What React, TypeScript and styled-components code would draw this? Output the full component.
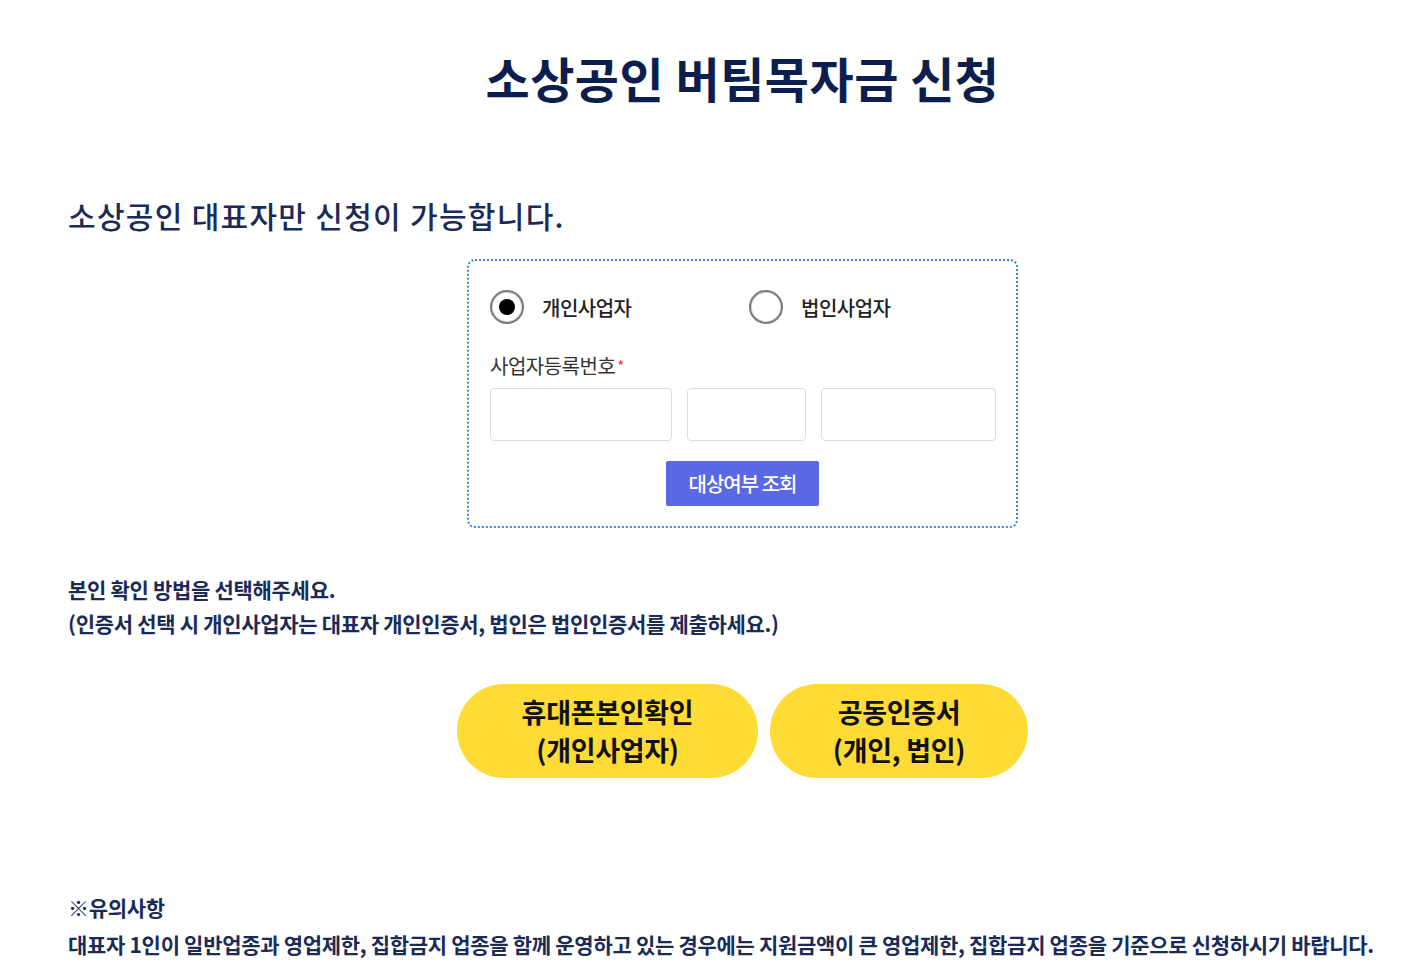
import React, { useState } from "react";
import styled, { createGlobalStyle } from "styled-components";

const Global = createGlobalStyle`
  html, body { margin: 0; padding: 0; background: #fff; overflow-x: hidden; }
  body { font-family: "Noto Sans CJK KR", "Noto Sans", sans-serif; color: #1b2a55; }
  * { box-sizing: border-box; }
`;

const Page = styled.div`
  width: 1349px;
  margin-left: 68px;
  padding-top: 43px;
  padding-bottom: 20px;
`;

const Title = styled.h1`
  margin: 0;
  text-align: center;
  font-size: 48px;
  line-height: 68px;
  font-weight: 700;
  color: #0b1e4d;
  letter-spacing: 0.5px;
`;

const Subtitle = styled.h2`
  margin: 84px 0 0;
  font-size: 30px;
  line-height: 40px;
  font-weight: 500;
  color: #1b2b57;
  letter-spacing: 1.3px;
`;

const Box = styled.div`
  width: 551px;
  height: 269px;
  margin: 24px auto 0;
  border: 2px dotted #3a83d8;
  border-radius: 8px;
  padding: 29px 21px 0 21px;
`;

const RadioRow = styled.div`
  display: grid;
  grid-template-columns: 259px auto;
  align-items: center;
`;

const RadioLabel = styled.label`
  display: flex;
  align-items: center;
  gap: 18px;
  font-size: 20px;
  font-weight: 500;
  color: #222;
  letter-spacing: -0.5px;
  cursor: pointer;
`;

const Circle = styled.span<{ $on: boolean }>`
  width: 34px;
  height: 34px;
  border-radius: 50%;
  border: 2px solid #7a7a7a;
  box-shadow: inset 0 0 0 1px #d6d6d6;
  display: flex;
  align-items: center;
  justify-content: center;
  &::after {
    content: "";
    width: 16px;
    height: 16px;
    border-radius: 50%;
    background: #000;
    display: ${(p) => (p.$on ? "block" : "none")};
  }
`;

const FieldLabel = styled.div`
  margin-top: 28px;
  font-size: 20px;
  line-height: 28px;
  color: #333;
  letter-spacing: -0.5px;
`;

const Star = styled.span`
  color: #e53935;
  font-size: 15px;
  vertical-align: top;
  margin-left: 2px;
`;

const Inputs = styled.div`
  display: grid;
  grid-template-columns: 182px 119px 175px;
  gap: 15px;
  margin-top: 8px;
`;

const Field = styled.input`
  height: 53px;
  border: 1px solid #dcdcdc;
  border-radius: 4px;
  background: #fff;
  font-size: 18px;
  padding: 0 10px;
  outline: none;
`;

const CheckButton = styled.button`
  display: block;
  margin: 20px 0 0 176px;
  width: 153px;
  height: 45px;
  border: none;
  border-radius: 2px;
  background: #5a68e6;
  color: #fff;
  font-family: inherit;
  font-size: 20px;
  font-weight: 500;
  letter-spacing: -1px;
  cursor: pointer;
`;

const Guide = styled.p`
  margin: 44px 0 0;
  font-size: 21px;
  line-height: 34px;
  font-weight: 700;
  color: #1b2b57;
  letter-spacing: -0.3px;
`;

const AuthRow = styled.div`
  display: flex;
  justify-content: center;
  gap: 12px;
  margin-top: 44px;
`;

const AuthButton = styled.button<{ $w: number }>`
  width: ${(p) => p.$w}px;
  height: 94px;
  border: none;
  border-radius: 47px;
  background: #ffdc35;
  color: #111;
  font-family: inherit;
  font-size: 27px;
  line-height: 38px;
  font-weight: 600;
  letter-spacing: -0.3px;
  cursor: pointer;
`;

const Notice = styled.div`
  margin-top: 111px;
  font-size: 21px;
  line-height: 37px;
  font-weight: 700;
  color: #1b2b57;
  letter-spacing: -0.3px;
  white-space: nowrap;
`;

export default function App() {
  const [type, setType] = useState<"p" | "c">("p");
  return (
    <>
      <Global />
      <Page>
        <Title>소상공인 버팀목자금 신청</Title>
        <Subtitle>소상공인 대표자만 신청이 가능합니다.</Subtitle>
        <Box>
          <RadioRow>
            <RadioLabel onClick={() => setType("p")}>
              <Circle $on={type === "p"} />
              개인사업자
            </RadioLabel>
            <RadioLabel onClick={() => setType("c")}>
              <Circle $on={type === "c"} />
              법인사업자
            </RadioLabel>
          </RadioRow>
          <FieldLabel>
            사업자등록번호<Star>*</Star>
          </FieldLabel>
          <Inputs>
            <Field maxLength={3} />
            <Field maxLength={2} />
            <Field maxLength={5} />
          </Inputs>
          <CheckButton>대상여부 조회</CheckButton>
        </Box>
        <Guide>
          본인 확인 방법을 선택해주세요.
          <br />
          (인증서 선택 시 개인사업자는 대표자 개인인증서, 법인은 법인인증서를 제출하세요.)
        </Guide>
        <AuthRow>
          <AuthButton $w={301}>
            휴대폰본인확인
            <br />
            (개인사업자)
          </AuthButton>
          <AuthButton $w={258}>
            공동인증서
            <br />
            (개인, 법인)
          </AuthButton>
        </AuthRow>
        <Notice>
          ※유의사항
          <br />
          대표자 1인이 일반업종과 영업제한, 집합금지 업종을 함께 운영하고 있는 경우에는 지원금액이 큰 영업제한, 집합금지 업종을 기준으로 신청하시기 바랍니다.
        </Notice>
      </Page>
    </>
  );
}
